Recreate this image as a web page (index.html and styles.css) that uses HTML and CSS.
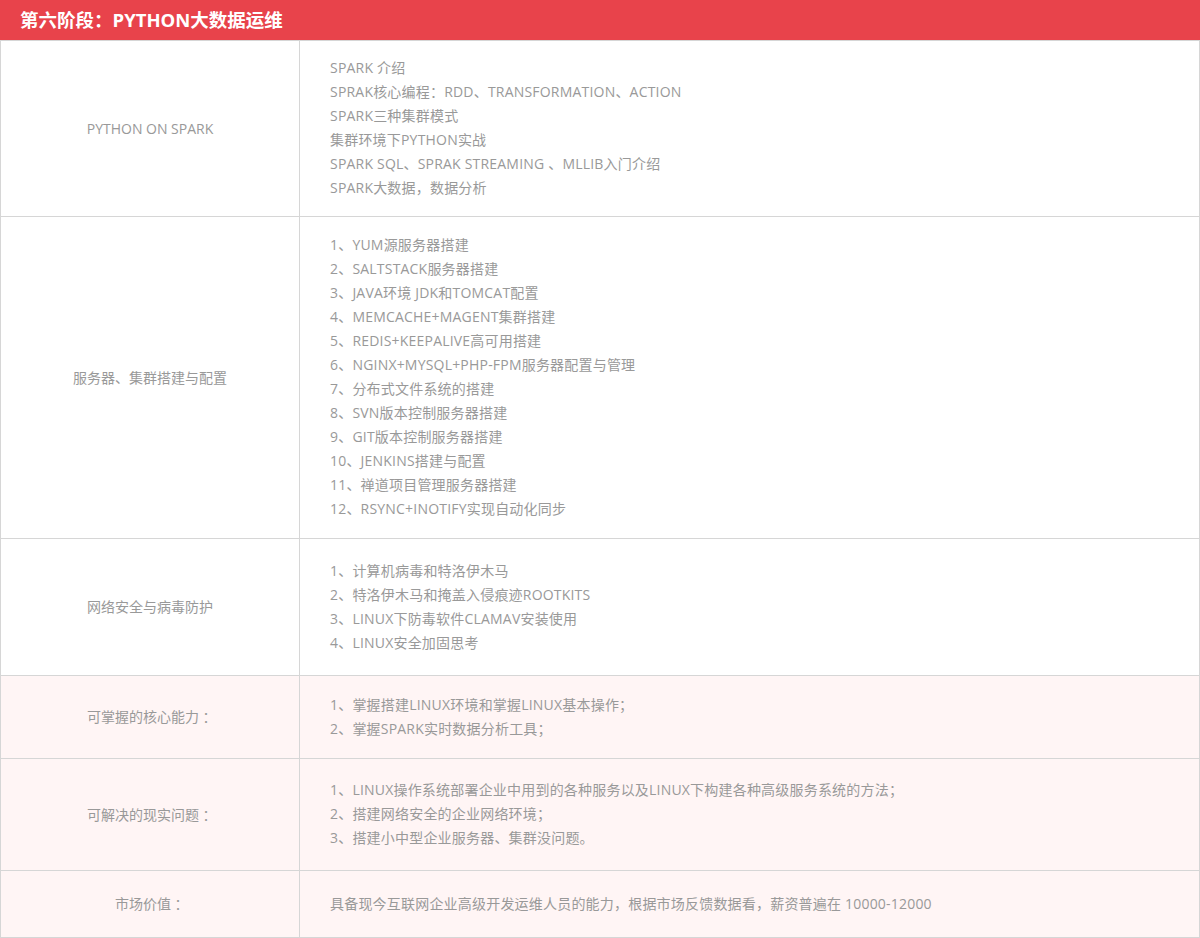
FILE: index.html
```html
<!DOCTYPE html>
<html lang="zh-CN">
<head>
<meta charset="utf-8">
<title>第六阶段：PYTHON大数据运维</title>
<link rel="stylesheet" href="styles.css">
</head>
<body>
<div class="stage">
  <div class="stage-title">第六阶段<span class="punct">：</span>PYTHON大数据运维</div>
  <div class="table">
    <div class="row row--a">
      <div class="cell-name">PYTHON ON SPARK</div>
      <div class="cell-body">
        <p>SPARK 介绍</p>
        <p>SPRAK核心编程<span class="punct">：</span>RDD、TRANSFORMATION、ACTION</p>
        <p>SPARK三种集群模式</p>
        <p>集群环境下PYTHON实战</p>
        <p>SPARK SQL、SPRAK STREAMING 、MLLIB入门介绍</p>
        <p>SPARK大数据<span class="punct">，</span>数据分析</p>
      </div>
    </div>
    <div class="row row--b">
      <div class="cell-name">服务器、集群搭建与配置</div>
      <div class="cell-body">
        <p>1、YUM源服务器搭建</p>
        <p>2、SALTSTACK服务器搭建</p>
        <p>3、JAVA环境 JDK和TOMCAT配置</p>
        <p>4、MEMCACHE+MAGENT集群搭建</p>
        <p>5、REDIS+KEEPALIVE高可用搭建</p>
        <p>6、NGINX+MYSQL+PHP-FPM服务器配置与管理</p>
        <p>7、分布式文件系统的搭建</p>
        <p>8、SVN版本控制服务器搭建</p>
        <p>9、GIT版本控制服务器搭建</p>
        <p>10、JENKINS搭建与配置</p>
        <p>11、禅道项目管理服务器搭建</p>
        <p>12、RSYNC+INOTIFY实现自动化同步</p>
      </div>
    </div>
    <div class="row row--c">
      <div class="cell-name">网络安全与病毒防护</div>
      <div class="cell-body">
        <p>1、计算机病毒和特洛伊木马</p>
        <p>2、特洛伊木马和掩盖入侵痕迹ROOTKITS</p>
        <p>3、LINUX下防毒软件CLAMAV安装使用</p>
        <p>4、LINUX安全加固思考</p>
      </div>
    </div>
    <div class="row row--d row--pink">
      <div class="cell-name">可掌握的核心能力<span class="punct">：</span></div>
      <div class="cell-body">
        <p>1、掌握搭建LINUX环境和掌握LINUX基本操作<span class="punct">；</span></p>
        <p>2、掌握SPARK实时数据分析工具<span class="punct">；</span></p>
      </div>
    </div>
    <div class="row row--e row--pink">
      <div class="cell-name">可解决的现实问题<span class="punct">：</span></div>
      <div class="cell-body">
        <p>1、LINUX操作系统部署企业中用到的各种服务以及LINUX下构建各种高级服务系统的方法<span class="punct">；</span></p>
        <p>2、搭建网络安全的企业网络环境<span class="punct">；</span></p>
        <p>3、搭建小中型企业服务器、集群没问题。</p>
      </div>
    </div>
    <div class="row row--f row--pink">
      <div class="cell-name">市场价值<span class="punct">：</span></div>
      <div class="cell-body">
        <p>具备现今互联网企业高级开发运维人员的能力<span class="punct">，</span>根据市场反馈数据看<span class="punct">，</span>薪资普遍在 10000-12000</p>
      </div>
    </div>
  </div>
</div>
</body>
</html>
```

FILE: styles.css
```css
* { box-sizing: border-box; }
html, body { margin: 0; padding: 0; background: #fff; }
body {
  font-family: "Open Sans", "Noto Sans CJK SC", sans-serif;
  font-size: 14px;
  color: #999;
}
.punct {
  font-family: "Noto Sans CJK TC", sans-serif;
  line-height: 0;
}
.stage { width: 1200px; }
.stage-title {
  height: 40px;
  line-height: 40px;
  background: #e8434b;
  color: #fff;
  font-size: 18.5px;
  font-weight: bold;
  padding-left: 20px;
}
.table {
  border-left: 1px solid #d6d6d6;
  border-right: 1px solid #d6d6d6;
}
.row {
  display: grid;
  grid-template-columns: 299px 1fr;
  border-bottom: 1px solid #d6d6d6;
}
.row--pink { background: #fff5f5; }
.cell-name {
  display: flex;
  align-items: center;
  justify-content: center;
  border-right: 1px solid #d6d6d6;
  line-height: 24px;
  text-align: center;
}
.cell-body {
  padding-left: 30px;
  line-height: 24px;
  letter-spacing: 0.2px;
}
.cell-body p { margin: 0; white-space: nowrap; height: 24px; }
.row--a { border-top: 1px solid #d6d6d6; }
.row--a .cell-body { padding-top: 15px; padding-bottom: 16px; }
.row--b .cell-body { padding-top: 16px; padding-bottom: 17px; }
.row--c .cell-body { padding-top: 20px; padding-bottom: 20px; }
.row--d .cell-body { padding-top: 17px; padding-bottom: 17px; }
.row--e .cell-body { padding-top: 19px; padding-bottom: 20px; }
.row--f .cell-body { padding-top: 21px; padding-bottom: 21px; }
```
